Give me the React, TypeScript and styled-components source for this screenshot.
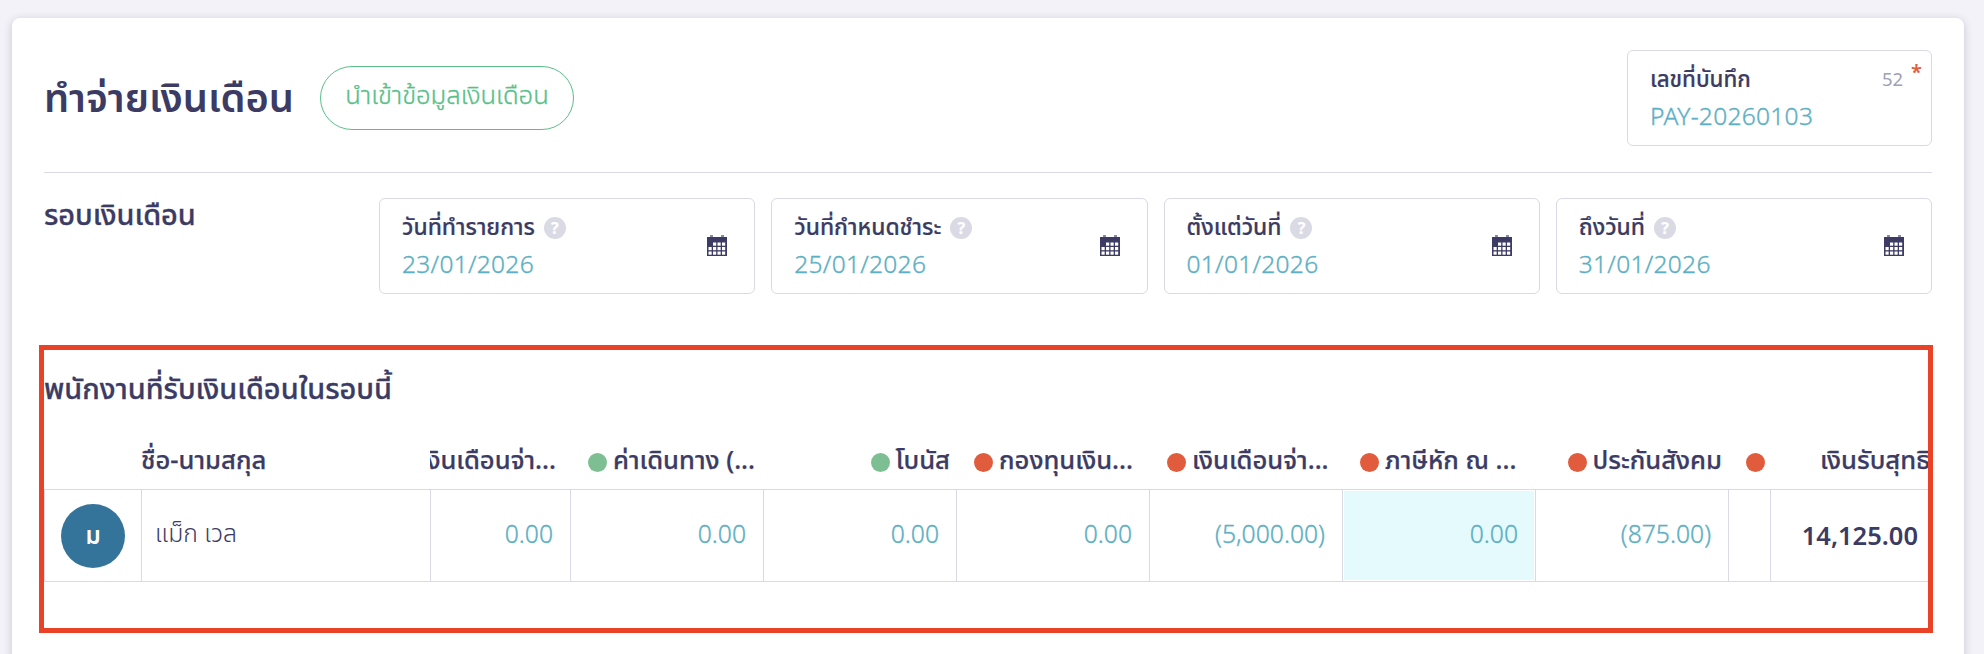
import React from 'react';
import styled, { createGlobalStyle } from 'styled-components';

const GlobalStyle = createGlobalStyle`
  * { box-sizing: border-box; }
  body {
    margin: 0;
    background: #f3f2f8;
    color: #3b3b64;
    font-family: 'Noto Sans', 'Noto Sans Thai', 'Open Sans', sans-serif;
  }
`;

const Page = styled.div`
  height: 654px;
  overflow: hidden;
  padding: 18px 20px 0 12px;
`;

const Card = styled.main`
  height: 720px;
  padding: 32px;
  background: #fff;
  border-radius: 8px;
  box-shadow: 0 2px 8px rgba(40, 40, 80, 0.22);
`;

const Header = styled.header`
  display: flex;
  align-items: center;
  height: 123px;
  padding-bottom: 26px;
  border-bottom: 1px solid #dadae5;
`;

const Title = styled.h1`
  margin: 0 28px 0 0;
  padding-bottom: 3px;
  width: 248px;
  font-size: 39.8px;
  line-height: 60px;
  font-weight: 600;
  white-space: nowrap;
`;

const ImportButton = styled.button`
  width: 254px;
  height: 64px;
  padding: 0 0 3px;
  border: 1px solid #5bbf8a;
  border-radius: 32px;
  background: #fff;
  color: #5bbf8a;
  font: inherit;
  font-size: 25.6px;
  font-weight: 360;
  -webkit-text-stroke: 0.35px currentColor;
  white-space: nowrap;
`;

const Field = styled.div<{ $push?: boolean }>`
  display: flex;
  justify-content: space-between;
  width: ${(p) => (p.$push ? '305px' : 'auto')};
  margin-left: ${(p) => (p.$push ? 'auto' : '0')};
  height: 96px;
  padding: 9px 27px 0 22px;
  border: 1px solid #dadae5;
  border-radius: 6px;
`;

const FieldLabel = styled.div<{ $tight?: boolean }>`
  display: flex;
  align-items: center;
  gap: 9px;
  height: 37px;
  font-size: ${(p) => (p.$tight ? '22.3px' : '22.9px')};
  line-height: 38px;
  font-weight: 550;
  -webkit-text-stroke: 0.2px currentColor;
  white-space: nowrap;
`;

const FieldValue = styled.div`
  height: 38px;
  font-size: 24.5px;
  line-height: 38px;
  font-weight: 360;
  letter-spacing: 0.3px;
  color: #5db0c4;
  -webkit-text-stroke: 0.35px currentColor;
  white-space: nowrap;
`;

const Counter = styled.div`
  display: flex;
  gap: 8px;
  margin-right: -18px;
  font-size: 18.5px;
  line-height: 37px;
  color: #a09fb6;
`;

const Required = styled.span`
  font-size: 20px;
  line-height: 23px;
  font-weight: 600;
  color: #e05c3c;
`;

const Help = styled.span`
  width: 22px;
  height: 22px;
  margin-top: 2px;
  border-radius: 50%;
  background: #dadae5;
  color: #fff;
  font-size: 16px;
  line-height: 22px;
  font-weight: 700;
  text-align: center;
`;

const Period = styled.section`
  display: grid;
  grid-template-columns: 319px repeat(4, 1fr);
  column-gap: 16px;
  padding-top: 25px;
`;

const SectionTitle = styled.h2`
  margin: -4px 0 0;
  font-size: 28.9px;
  line-height: 40px;
  font-weight: 530;
  -webkit-text-stroke: 0.3px currentColor;
  white-space: nowrap;
`;

const Highlight = styled.section`
  width: 1894px;
  height: 288px;
  margin: 51px 0 0 -5px;
  border: 5px solid #ea4226;
  overflow: hidden;
`;

const EmployeesTitle = styled(SectionTitle)`
  height: 86px;
  margin: 0;
  padding-top: 18px;
`;

const Columns = styled.div`
  display: grid;
  grid-template-columns: 97px 289px 140px repeat(6, 193px) 42px 171px;
`;

const HeadCell = styled.div<{ $start?: boolean; $inset?: number }>`
  display: flex;
  align-items: center;
  justify-content: ${(p) => (p.$start ? 'flex-start' : 'flex-end')};
  gap: 6px;
  height: 53px;
  overflow: hidden;
  padding: ${(p) => (p.$start ? `0 0 0 ${p.$inset ?? 0}px` : `0 ${p.$inset ?? 0}px 0 0`)};
  font-size: 25.6px;
  line-height: 48px;
  font-weight: 540;
  -webkit-text-stroke: 0.25px currentColor;
  white-space: nowrap;
`;

const HeadText = styled.span`
  height: 53px;
`;

const Dot = styled.i<{ $kind: 'income' | 'deduct' }>`
  flex: none;
  width: 19px;
  height: 19px;
  border-radius: 50%;
  background: ${(p) => (p.$kind === 'income' ? '#7dbf92' : '#e05c3c')};
`;

const Cell = styled.div<{ $active?: boolean; $align?: string; $strong?: boolean }>`
  display: flex;
  align-items: center;
  justify-content: ${(p) => p.$align ?? 'flex-end'};
  height: 93px;
  padding: ${(p) =>
    p.$align === 'flex-start' ? '0 0 6px 13px' : p.$align ? '0' : p.$strong ? '0 23px 2px 0' : '0 17px 3px 0'};
  border: 1px solid #dadae5;
  border-right: 0;
  box-shadow: ${(p) => (p.$active ? 'inset 0 0 0 1px #fff' : 'none')};
  background: ${(p) => (p.$active ? '#e5fafd' : 'transparent')};
  color: ${(p) => (p.$strong || p.$align ? '#3b3b64' : '#5db0c4')};
  font-size: ${(p) => (p.$strong ? '25.5px' : '24.7px')};
  line-height: 36px;
  font-weight: ${(p) => (p.$strong ? 600 : 360)};
  -webkit-text-stroke: ${(p) => (p.$strong || p.$align ? '0' : '0.35px currentColor')};
  white-space: nowrap;
`;

const Avatar = styled.div`
  width: 64px;
  height: 64px;
  border-radius: 50%;
  background: #35749a;
  color: #fff;
  font-size: 24px;
  line-height: 62px;
  font-weight: 600;
  text-align: center;
`;

const CalendarSvg = styled.svg`
  width: 20px;
  height: 22px;
  margin-top: 27px;
`;

const Calendar = () => (
  <CalendarSvg viewBox="0 0 20 22">
    <path fill="#8a8aa5" d="M3 0h3v2H3zM14 0h3v2h-3z" />
    <path fill="#3b3b64" d="M0 2h20v19H0z" />
    {[[6, 7.5], [1.5, 12], [1.5, 16.5]].map(([from, y]) =>
      [1.5, 6, 10.5, 15].filter((x) => x >= from).map((x) => (
        <rect key={`${x}-${y}`} x={x} y={y} width="3.2" height="3.2" fill="#fff" />
      )),
    )}
  </CalendarSvg>
);

const dates = [
  ['วันที่ทำรายการ', '23/01/2026'],
  ['วันที่กำหนดชำระ', '25/01/2026'],
  ['ตั้งแต่วันที่', '01/01/2026'],
  ['ถึงวันที่', '31/01/2026'],
];

type Pay = { name: string; kind: 'income' | 'deduct'; value: string; start?: boolean; inset: number; active?: boolean };

const pays: Pay[] = [
  { name: 'เงินเดือนจ่า...', kind: 'income', value: '0.00', inset: 14 },
  { name: 'ค่าเดินทาง (...', kind: 'income', value: '0.00', start: true, inset: 18 },
  { name: 'โบนัส', kind: 'income', value: '0.00', inset: 6 },
  { name: 'กองทุนเงิน...', kind: 'deduct', value: '0.00', start: true, inset: 18 },
  { name: 'เงินเดือนจ่า...', kind: 'deduct', value: '(5,000.00)', start: true, inset: 18 },
  { name: 'ภาษีหัก ณ ...', kind: 'deduct', value: '0.00', start: true, inset: 18, active: true },
  { name: 'ประกันสังคม', kind: 'deduct', value: '(875.00)', inset: 6 },
];

export default function App() {
  return (
    <Page>
      <GlobalStyle />
      <Card>
        <Header>
          <Title>ทำจ่ายเงินเดือน</Title>
          <ImportButton>นำเข้าข้อมูลเงินเดือน</ImportButton>
          <Field $push>
            <div>
              <FieldLabel $tight>เลขที่บันทึก</FieldLabel>
              <FieldValue>PAY-20260103</FieldValue>
            </div>
            <Counter>
              52 <Required>*</Required>
            </Counter>
          </Field>
        </Header>
        <Period>
          <SectionTitle>รอบเงินเดือน</SectionTitle>
          {dates.map(([label, value]) => (
            <Field key={label}>
              <div>
                <FieldLabel>
                  <span>{label}</span>
                  <Help>?</Help>
                </FieldLabel>
                <FieldValue>{value}</FieldValue>
              </div>
              <Calendar />
            </Field>
          ))}
        </Period>
        <Highlight>
          <EmployeesTitle>พนักงานที่รับเงินเดือนในรอบนี้</EmployeesTitle>
          <Columns>
            <HeadCell />
            <HeadCell $start>
              <HeadText>ชื่อ-นามสกุล</HeadText>
            </HeadCell>
            {pays.map((p, i) => (
              <HeadCell key={i} $start={p.start} $inset={p.inset}>
                <Dot $kind={p.kind} />
                <HeadText>{p.name}</HeadText>
              </HeadCell>
            ))}
            <HeadCell $start $inset={18}>
              <Dot $kind="deduct" />
            </HeadCell>
            <HeadCell $start $inset={50}>
              <HeadText>เงินรับสุทธิ</HeadText>
            </HeadCell>
            <Cell $align="center">
              <Avatar>ม</Avatar>
            </Cell>
            <Cell $align="flex-start">แม็ก เวล</Cell>
            {pays.map((p, i) => (
              <Cell key={i} $active={p.active}>{p.value}</Cell>
            ))}
            <Cell />
            <Cell $strong>14,125.00</Cell>
          </Columns>
        </Highlight>
      </Card>
    </Page>
  );
}
